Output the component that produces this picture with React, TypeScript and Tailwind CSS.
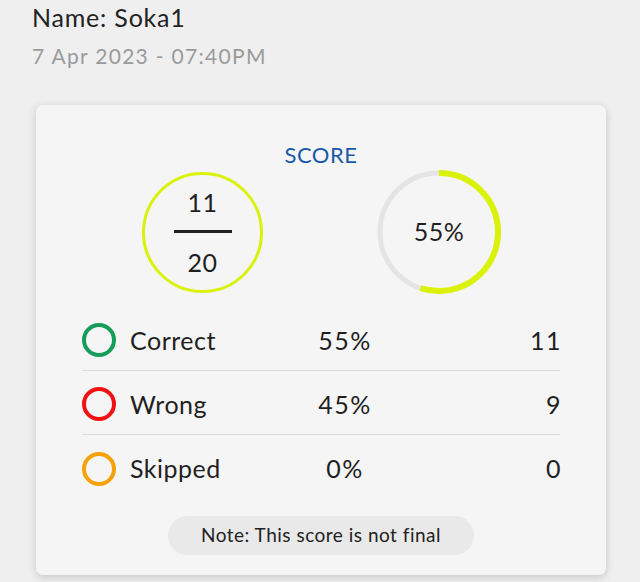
import React from "react";

const rows = [
  { label: "Correct", pct: "55%", count: "11", color: "border-[#169c59]" },
  { label: "Wrong", pct: "45%", count: "9", color: "border-[#f01212]" },
  { label: "Skipped", pct: "0%", count: "0", color: "border-[#f5a20a]" },
];

export default function App() {
  const r = 59;
  const c = 2 * Math.PI * r;
  return (
    <div className="w-[640px] h-[582px] bg-[#efefef] overflow-hidden text-[#1f1f1f] tracking-[0.5px]" style={{ fontFamily: "Lato, 'Noto Sans', sans-serif" }}>
      <div className="pl-[32px] pt-0">
        <div className="text-[25px] leading-[34px] text-[#222] tracking-[0.8px]">Name: Soka1</div>
        <div className="text-[21px] leading-[30px] text-[#9a9a9a] mt-[7px] tracking-[1.3px]">7 Apr 2023 - 07:40PM</div>
      </div>
      <div className="ml-[36px] mt-[34px] w-[570px] h-[470px] bg-[#f5f5f5] rounded-[7px] shadow-[0_2px_8px_rgba(0,0,0,0.18)] pt-[36px]">
        <div className="text-center text-[22px] leading-[28px] text-[#1a58a8]">SCORE</div>
        <div className="pl-[49px] pr-[46px] mt-[1px] flex justify-around items-center h-[124px]">
          <div className="w-[121px] h-[121px] rounded-full border-[3px] border-[#daf20a] flex flex-col items-center justify-center">
            <div className="text-[25px] leading-[30px]">11</div>
            <div className="w-[58px] h-[3px] bg-[#222] mt-[13px] mb-[14px]"></div>
            <div className="text-[25px] leading-[30px]">20</div>
          </div>
          <div className="relative w-[124px] h-[124px] flex items-center justify-center mr-[2px]">
            <svg width="124" height="124" viewBox="0 0 124 124" className="absolute inset-0">
              <circle cx="62" cy="62" r={r} fill="none" stroke="#e4e4e4" strokeWidth="5" />
              <circle
                cx="62"
                cy="62"
                r={r}
                fill="none"
                stroke="#daf20a"
                strokeWidth="6"
                strokeDasharray={`${c * 0.55} ${c}`}
                transform="rotate(-90 62 62)"
              />
            </svg>
            <span className="relative text-[25px]">55%</span>
          </div>
        </div>
        <div className="px-[46px] mt-[13px]">
          {rows.map((row, i) => (
            <div
              key={row.label}
              className={`grid grid-cols-[222px_82px_1fr] items-center h-[64px] pt-[4px] ${i < 2 ? "border-b border-[#dcdcdc]" : ""}`}
            >
              <div className="flex items-center gap-[14px]">
                <div className={`w-[34px] h-[34px] rounded-full border-[4px] ${row.color} mt-[-1px]`}></div>
                <span className="text-[25px]">{row.label}</span>
              </div>
              <div className="text-center text-[25px] tracking-[1.5px]">{row.pct}</div>
              <div className="text-right text-[25px] tracking-[1.5px] mr-[-2px]">{row.count}</div>
            </div>
          ))}
        </div>
        <div className="flex justify-center mt-[17px]">
          <div className="w-[306px] h-[39px] rounded-full bg-[#e9e9e9] flex items-center justify-center text-[19px] text-[#222]">
            Note: This score is not final
          </div>
        </div>
      </div>
    </div>
  );
}
